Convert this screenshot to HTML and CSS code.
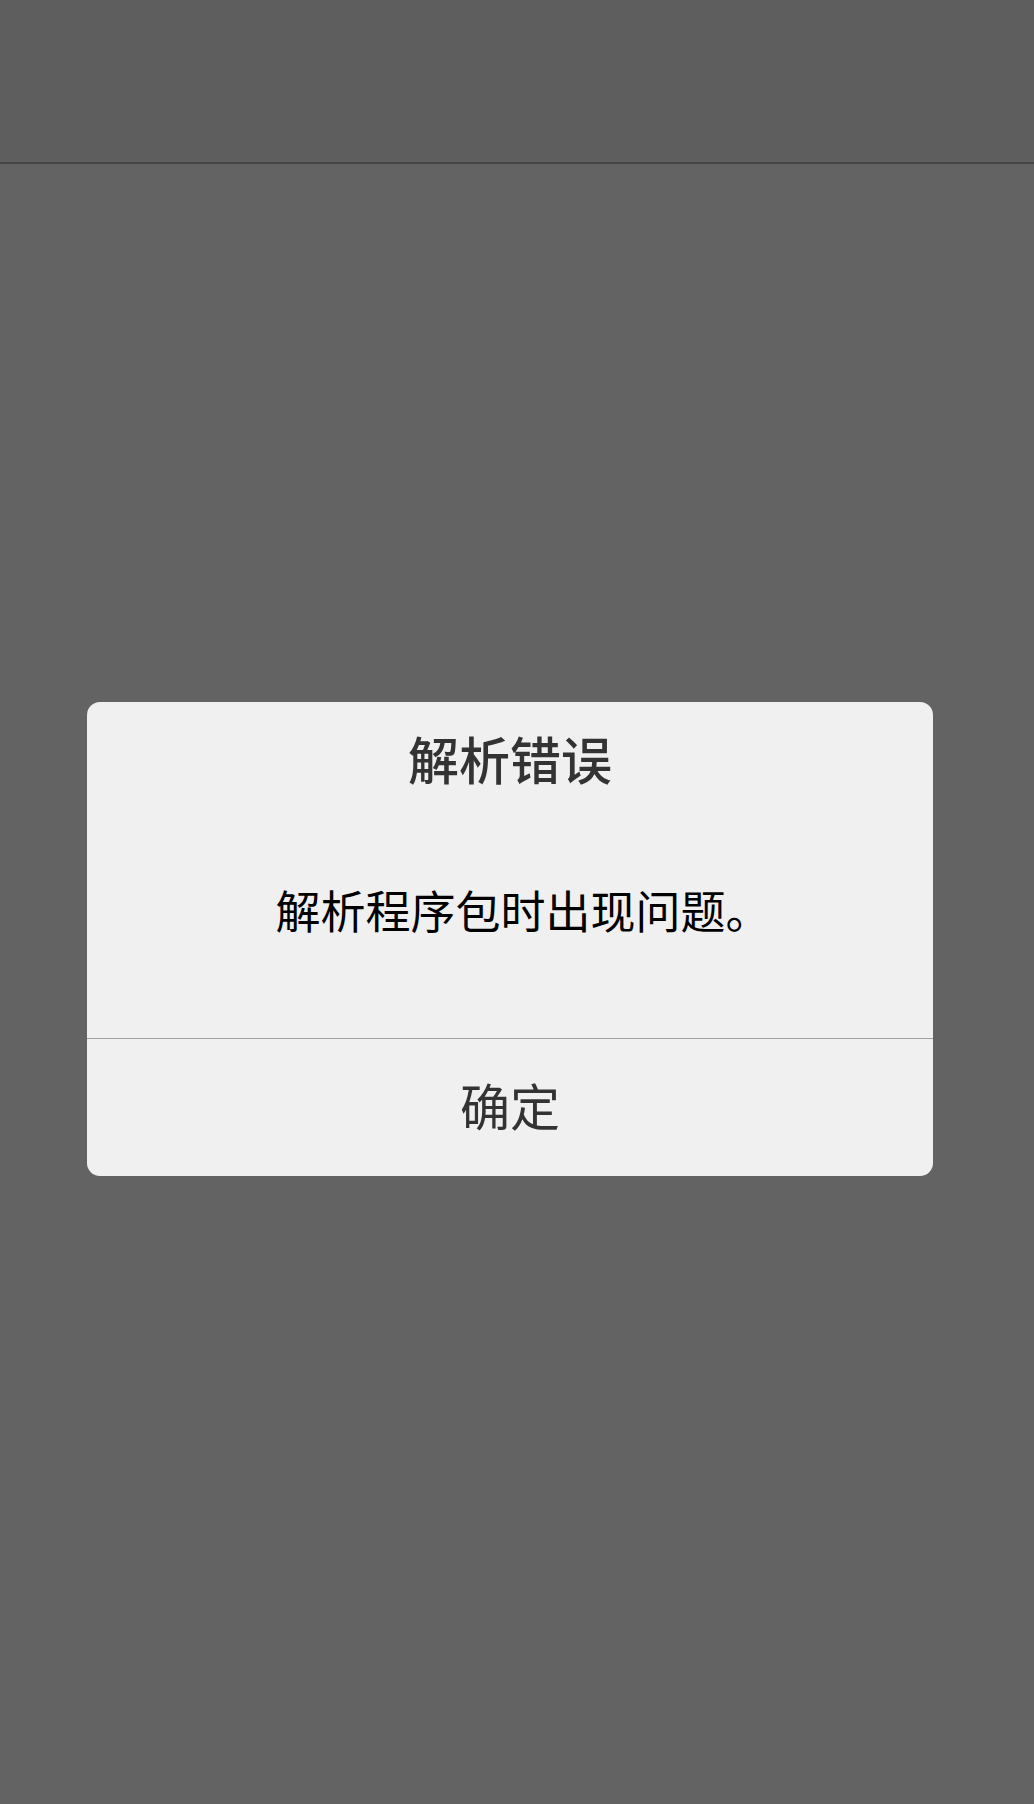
FILE: index.html
```html
<!DOCTYPE html>
<html lang="zh-CN">
<head>
<meta charset="utf-8">
<title>解析错误</title>
<link rel="stylesheet" href="styles.css">
</head>
<body>
<div class="screen">
  <header class="topbar"></header>
  <main class="overlay">
    <div class="dialog" role="alertdialog">
      <h1 class="title">解析错误</h1>
      <p class="message">解析程序包时出现问题。</p>
      <div class="actions">
        <button class="btn" type="button">确定</button>
      </div>
    </div>
  </main>
</div>
</body>
</html>
```

FILE: styles.css
```css
html, body {
  margin: 0;
  padding: 0;
  background: #636363;
}

body {
  font-family: "Noto Sans CJK SC", "Noto Sans", sans-serif;
}

.screen {
  width: 1034px;
  min-height: 1804px;
  display: flex;
  flex-direction: column;
  background: #636363;
}

.topbar {
  height: 162px;
  background: #5e5e5e;
  border-bottom: 2px solid #454545;
}

.overlay {
  padding: 538px 0 0 87px;
}

.dialog {
  width: 846px;
  background: #f0f0f0;
  border-radius: 13px;
  display: flex;
  flex-direction: column;
  overflow: hidden;
}

.title {
  margin: 0;
  padding: 31px 0 0;
  font-size: 51px;
  line-height: 51px;
  font-weight: 500;
  color: #333333;
  text-align: center;
}

.message {
  margin: 0;
  padding: 103px 0 106px 26px;
  font-size: 45px;
  line-height: 45px;
  font-weight: 400;
  color: #000000;
  text-align: center;
  border-bottom: 1px solid #a0a0a0;
}

.actions {
  display: flex;
  justify-content: center;
}

.btn {
  width: 100%;
  height: 137px;
  margin: 0;
  padding: 0 0 8px;
  border: 0;
  background: transparent;
  font-family: "Noto Sans CJK SC", "Noto Sans", sans-serif;
  font-size: 50px;
  line-height: 50px;
  font-weight: 400;
  color: #333333;
  text-align: center;
}
```
